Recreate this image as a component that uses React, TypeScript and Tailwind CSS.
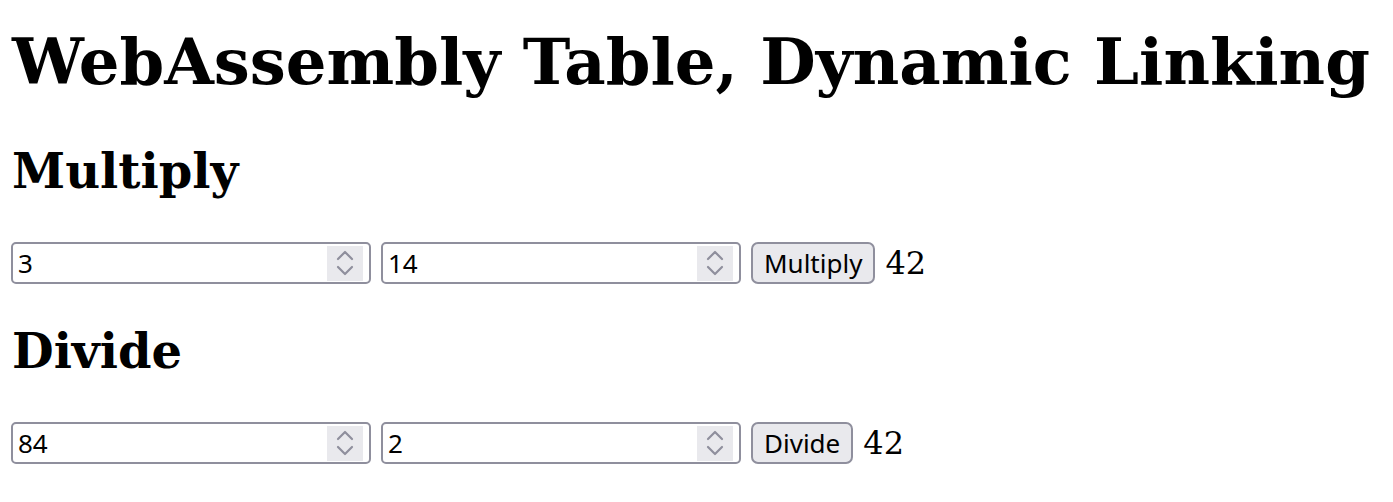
import { useState } from 'react';

function Spinner() {
  return (
    <span className="pointer-events-none absolute right-[8px] top-[4px] h-[35px] w-[36px] bg-[#e9e9ed]">
      <svg width="36" height="35" viewBox="0 0 36 35" fill="none" stroke="#8f8f9d" strokeWidth="2.2" strokeLinecap="round" strokeLinejoin="round">
        <path d="M11 13 L18 6 L25 13" />
        <path d="M11 21 L18 28 L25 21" />
      </svg>
    </span>
  );
}

function NumberField({ value, onChange }: { value: string; onChange: (v: string) => void }) {
  return (
    <span className="relative inline-block h-[42px] w-[360px]">
      <input
        type="text"
        inputMode="numeric"
        value={value}
        onChange={(e) => onChange(e.target.value)}
        className="h-[42px] w-[360px] rounded-[5px] border-[2px] border-[#8f8f9d] bg-white pl-[5px] pr-[50px] text-[26px] text-black outline-none"
        style={{ fontFamily: '"Noto Sans", sans-serif' }}
      />
      <Spinner />
    </span>
  );
}

function Row({ a, b, label, op }: { a: string; b: string; label: string; op: (x: number, y: number) => number }) {
  const [x, setX] = useState(a);
  const [y, setY] = useState(b);
  const [result, setResult] = useState(String(op(Number(a), Number(b))));
  return (
    <div className="-ml-px mt-[43px] flex h-[42px] items-center">
      <NumberField value={x} onChange={setX} />
      <span className="ml-[10px]">
        <NumberField value={y} onChange={setY} />
      </span>
      <button
        onClick={() => setResult(String(op(Number(x), Number(y))))}
        className="ml-[10px] h-[42px] rounded-[7px] border-[2px] border-[#8f8f9d] bg-[#e9e9ed] px-[11px] text-[26px] leading-none text-black"
        style={{ fontFamily: '"Noto Sans", sans-serif' }}
      >
        {label}
      </button>
      <span className="ml-[10px] text-[32px] leading-none">{result}</span>
    </div>
  );
}

export default function App() {
  return (
    <div className="bg-white px-[12px] pt-[12px] pb-[24px] text-black" style={{ fontFamily: '"DejaVu Serif", serif' }}>
      <h1 className="mt-[12px] text-[64px] font-bold leading-[75px] whitespace-nowrap">WebAssembly Table, Dynamic Linking</h1>
      <h2 className="mt-[44px] text-[48px] font-bold leading-[56px]">Multiply</h2>
      <Row a="3" b="14" label="Multiply" op={(x, y) => x * y} />
      <h2 className="mt-[39px] text-[48px] font-bold leading-[56px]">Divide</h2>
      <Row a="84" b="2" label="Divide" op={(x, y) => x / y} />
    </div>
  );
}
